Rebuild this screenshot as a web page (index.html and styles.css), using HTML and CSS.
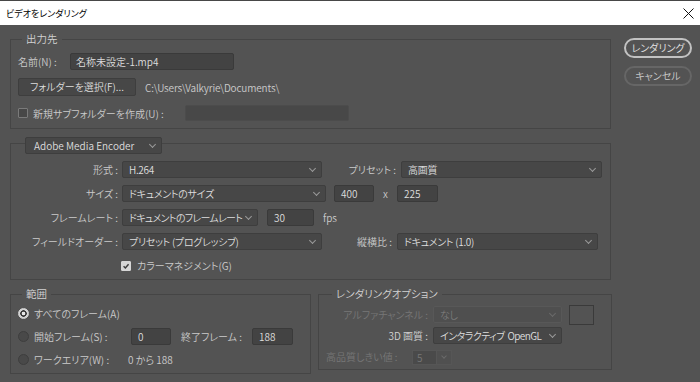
FILE: index.html
```html
<!DOCTYPE html>
<html lang="ja">
<head>
  <meta charset="UTF-8" />
  <title>ビデオをレンダリング</title>
  <link rel="stylesheet" href="styles.css">
</head>
<body>
<div class="titlebar">
  <span>ビデオをレンダリング</span>
  <svg class="close" width="11" height="11" viewBox="0 0 11 11"><path d="M0.5 0.5 L10.5 10.5 M10.5 0.5 L0.5 10.5" stroke="#111" stroke-width="1" fill="none"/></svg>
</div>

<div class="dialog">
  <div class="panels">
    <!-- 出力先 -->
    <div class="group out">
      <span class="legend">出力先</span>
      <div class="row"><span class="lbl-name">名前(N) :</span><div class="field w164">名称未設定-1.mp4</div></div>
      <div class="row"><div class="btn">フォルダーを選択(F)...</div><span class="path">C:\Users\Valkyrie\Documents\</span></div>
      <div class="row"><span class="check"></span><span class="cap sub-cap">新規サブフォルダーを作成(U) :</span><div class="field sub w164"></div></div>
    </div>

    <!-- encoder -->
    <div class="group enc">
      <div class="sel legend-sel">Adobe Media Encoder</div>
      <div class="row r17">
        <span class="lbl-col">形式 :</span><div class="sel w200">H.264</div>
        <span class="lbl-r w74">プリセット :</span><div class="sel w201">高画質</div>
      </div>
      <div class="row r17">
        <span class="lbl-col">サイズ :</span><div class="sel w204">ドキュメントのサイズ</div>
        <div class="field num w40 ml8">400</div><span class="times">x</span><div class="field num w41">225</div>
      </div>
      <div class="row r17">
        <span class="lbl-col">フレームレート :</span><div class="sel w136 tight">ドキュメントのフレームレート</div>
        <div class="field num w47 ml9">30</div><span class="fps">fps</span>
      </div>
      <div class="row r17">
        <span class="lbl-col">フィールドオーダー :</span><div class="sel w200">プリセット (プログレッシブ)</div>
        <span class="lbl-r w70">縦横比 :</span><div class="sel w201">ドキュメント (1.0)</div>
      </div>
      <div class="row r17">
        <span class="check on cm"><svg width="10" height="10" viewBox="0 0 10 10"><path d="M2 5.2 L4.2 7.4 L8.2 2.8" stroke="#3a3a3a" stroke-width="1.8" fill="none"/></svg></span>
        <span class="cap cm-cap">カラーマネジメント(G)</span>
      </div>
    </div>

    <div class="bottom">
      <!-- 範囲 -->
      <div class="group range">
        <span class="legend">範囲</span>
        <div class="row"><span class="radio on"></span><span class="cap">すべてのフレーム(A)</span></div>
        <div class="row">
          <span class="radio"></span><span class="cap w97">開始フレーム(S) :</span>
          <div class="field num w40">0</div>
          <span class="cap end">終了フレーム :</span><div class="field num w41">188</div>
        </div>
        <div class="row"><span class="radio"></span><span class="cap w94">ワークエリア(W) :</span><span>0 から 188</span></div>
      </div>

      <!-- レンダリングオプション -->
      <div class="group opts">
        <span class="legend lg-opt">レンダリングオプション</span>
        <div class="row r17">
          <span class="lbl-o off">アルファチャンネル :</span><div class="sel w129 dis">なし</div><span class="swatch"></span>
        </div>
        <div class="row r17">
          <span class="lbl-o">3D 画質 :</span><div class="sel w129 snug">インタラクティブ&nbsp; OpenGL</div>
        </div>
        <div class="row r17">
          <span class="lbl-q off">高品質しきい値 :</span>
          <div class="spin"><span class="spin-val">5</span><span class="spin-arrow"></span></div>
        </div>
      </div>
    </div>
  </div>

  <div class="actions">
    <div class="pill primary">レンダリング</div>
    <div class="pill">キャンセル</div>
  </div>
</div>
</body>
</html>
```

FILE: styles.css
```css
* { box-sizing: border-box; }
body {
  margin: 0;
  height: 382px;
  overflow: hidden;
  background: #535353;
  border-top: 1px solid #474747;
  font-family: "Noto Sans CJK JP", sans-serif;
  font-size: 10px;
  font-weight: 350;
  color: #cbcbcb;
  font-feature-settings: "palt";
}
.titlebar { height: 24px; background: #fff; color: #000; font-size: 9px; font-weight: 400; display: flex; align-items: center; justify-content: space-between; padding: 0 6px; }
.dialog { display: flex; padding: 14px 0 0 10px; }
.panels { flex: none; width: 601px; display: flex; flex-direction: column; gap: 14px; }

/* group boxes */
.group { position: relative; border: 1px solid #454545; display: flex; flex-direction: column; }
.legend { position: absolute; top: -9px; left: 11px; padding: 0 4px; line-height: 16px; font-size: 10.5px; background: #535353; color: #d2d2d2; }
.lg-opt { left: 13px; }
.out { height: 90px; padding: 12px 7px 0; gap: 8px; }
.enc { height: 137px; padding-top: 17px; gap: 7px; }
.bottom { display: flex; gap: 7px; }
.range { flex: none; width: 301px; height: 80px; padding: 9px 7px 0; gap: 5px; }
.opts { flex: none; width: 294px; height: 76px; padding-top: 11px; gap: 4px; }

.row { display: flex; align-items: center; height: 18px; white-space: nowrap; }
.row > * { flex: none; }
.r17 { height: 17px; }

/* controls */
.field { height: 17px; line-height: 15px; padding: 0 5px; background: #434343; border: 1px solid #3a3a3a; border-radius: 2px; color: #dedede; }
.field.sub { height: 16px; background: #484848; border-color: #4c4c4c; margin-left: 21px; }
.num { padding: 0 6px; }
.sel { position: relative; height: 17px; line-height: 15px; padding: 0 16px 0 6px; background: #474747; border: 1px solid #3e3e3e; border-radius: 2px; color: #dedede; letter-spacing: -0.3px; overflow: hidden; }
.sel.tight { letter-spacing: -0.7px; }
.sel.snug { letter-spacing: -0.6px; }
.sel::after { content: ""; position: absolute; right: 6px; top: 4px; width: 4px; height: 4px; border-right: 1px solid #9a9a9a; border-bottom: 1px solid #9a9a9a; transform: rotate(45deg); }
.sel.dis { background: #4f4f4f; border-color: #585858; color: #7a7a7a; }
.sel.dis::after { border-color: #6a6a6a; }
.legend-sel { position: absolute; top: -7px; left: 14px; width: 137px; padding-left: 8px; letter-spacing: 0; }

.btn { width: 118px; height: 18px; line-height: 16px; text-align: center; background: #474747; border: 1px solid #3e3e3e; border-radius: 2px; color: #dedede; }
.path { margin-left: 9px; letter-spacing: -0.15px; }
.lbl-name { width: 52px; }
.cap { margin-left: 5px; }
.check { width: 10px; height: 10px; border: 1px solid #7a7a7a; background: #474747; border-radius: 1px; }
.check.on { background: #d6d6d6; border-color: #d6d6d6; display: flex; align-items: center; justify-content: center; }
.cm { margin-left: 110px; }
.cm-cap { margin-left: 6px; }

.lbl-col { width: 107px; margin-right: 4px; text-align: right; }
.lbl-r { text-align: right; margin-right: 5px; }
.lbl-o { width: 109px; margin-right: 5px; text-align: right; color: #d2d2d2; }
.lbl-q { width: 93px; padding-left: 7px; }
.off { color: #777; }
.times { width: 23px; text-align: center; }
.fps { margin-left: 9px; }
.end { margin-left: 10px; width: 71px; }

.w40 { width: 40px; } .w41 { width: 41px; } .w47 { width: 47px; }
.w70 { width: 70px; } .w74 { width: 74px; } .w94 { width: 94px; } .w97 { width: 97px; }
.w129 { width: 129px; } .w136 { width: 136px; } .w164 { width: 164px; }
.w200 { width: 200px; } .w201 { width: 201px; } .w204 { width: 204px; }
.ml8 { margin-left: 8px; } .ml9 { margin-left: 9px; }

.radio { width: 11px; height: 11px; border-radius: 50%; background: #494949; border: 1px solid #3e3e3e; }
.radio.on { border-color: #d4d4d4; background: radial-gradient(circle, #e6e6e6 0 1.6px, #3a3a3a 2.1px 3px, #d4d4d4 3.5px); }

.swatch { width: 25px; height: 20px; margin-left: 7px; border: 1px solid #3a3a3a; background: #535353; }
.spin { display: flex; height: 15px; margin-top: 1px; }
.spin-val { width: 25px; padding-left: 4px; line-height: 13px; background: #4a4a4a; border: 1px solid #565656; color: #777; }
.spin-arrow { position: relative; width: 15px; border: 1px solid #565656; border-left: none; background: #505050; }
.spin-arrow::after { content: ""; position: absolute; left: 5px; top: 3px; width: 3px; height: 3px; border-right: 1px solid #6a6a6a; border-bottom: 1px solid #6a6a6a; transform: rotate(45deg); }

/* right buttons */
.actions { margin-left: 13px; margin-top: -1px; display: flex; flex-direction: column; gap: 8px; }
.pill { width: 68px; height: 20px; line-height: 16px; text-align: center; border: 2px solid #666; border-radius: 10px; color: #cfcfcf; }
.pill.primary { border-color: #c2c2c2; color: #e6e6e6; }
```
